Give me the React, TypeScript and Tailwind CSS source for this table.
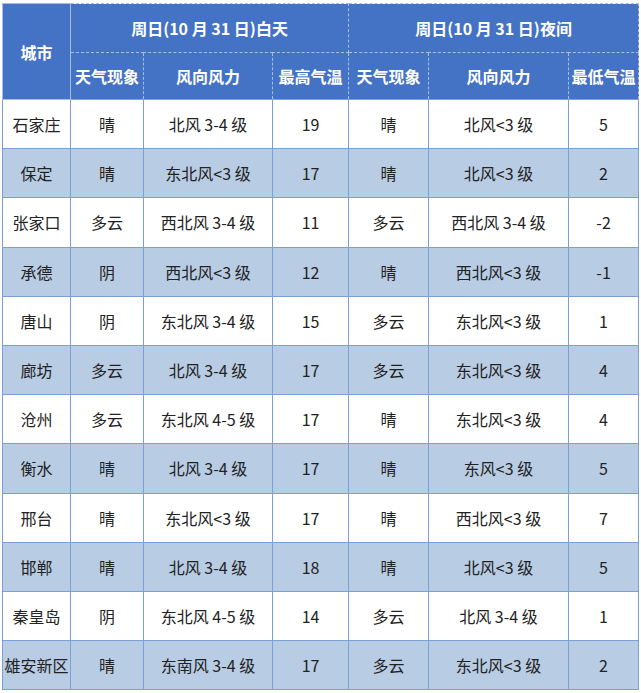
const rows: string[][] = [
  ["石家庄", "晴", "北风 3-4 级", "19", "晴", "北风<3 级", "5"],
  ["保定", "晴", "东北风<3 级", "17", "晴", "北风<3 级", "2"],
  ["张家口", "多云", "西北风 3-4 级", "11", "多云", "西北风 3-4 级", "-2"],
  ["承德", "阴", "西北风<3 级", "12", "晴", "西北风<3 级", "-1"],
  ["唐山", "阴", "东北风 3-4 级", "15", "多云", "东北风<3 级", "1"],
  ["廊坊", "多云", "北风 3-4 级", "17", "多云", "东北风<3 级", "4"],
  ["沧州", "多云", "东北风 4-5 级", "17", "晴", "东北风<3 级", "4"],
  ["衡水", "晴", "北风 3-4 级", "17", "晴", "东风<3 级", "5"],
  ["邢台", "晴", "东北风<3 级", "17", "晴", "西北风<3 级", "7"],
  ["邯郸", "晴", "北风 3-4 级", "18", "晴", "北风<3 级", "5"],
  ["秦皇岛", "阴", "东北风 4-5 级", "14", "多云", "北风 3-4 级", "1"],
  ["雄安新区", "晴", "东南风 3-4 级", "17", "多云", "东北风<3 级", "2"],
];

const widths = ["w-[68px]", "w-[73px]", "w-[129px]", "w-[76px]", "w-[80px]", "w-[140px]", "w-[70px]"];

const th = "border border-dashed border-[#a9bde6] font-bold text-white text-[16px] text-center p-0";
const td = "border border-[#7b9fd8] text-center text-[16px] text-[#222] p-0 whitespace-nowrap";

export default function App() {
  return (
    <div className="min-h-[693px] w-[641px] bg-white pt-[3px] pl-[2px] font-['Noto_Sans_CJK_SC','Noto_Sans',sans-serif]">
      <table className="w-[637px] table-fixed border-collapse">
        <colgroup>
          {widths.map((w, i) => (
            <col key={i} className={w} />
          ))}
        </colgroup>
        <thead className="bg-[#4472c4]">
          <tr className="h-[49px]">
            <th rowSpan={2} className={th + " border-solid border-[#7b9fd8]"}>
              城市
            </th>
            <th colSpan={3} className={th}>
              周日(10 月 31 日)白天
            </th>
            <th colSpan={3} className={th}>
              周日(10 月 31 日)夜间
            </th>
          </tr>
          <tr className="h-[47px]">
            <th className={th}>天气现象</th>
            <th className={th}>风向风力</th>
            <th className={th}>最高气温</th>
            <th className={th}>天气现象</th>
            <th className={th}>风向风力</th>
            <th className={th + " whitespace-nowrap"}>最低气温</th>
          </tr>
        </thead>
        <tbody>
          {rows.map((r, i) => (
            <tr key={r[0]} className={i % 2 === 0 ? "h-[49.2px] bg-white" : "h-[49.2px] bg-[#b8cce4]"}>
              {r.map((c, j) => (
                <td key={j} className={td}>
                  {c}
                </td>
              ))}
            </tr>
          ))}
        </tbody>
      </table>
    </div>
  );
}
